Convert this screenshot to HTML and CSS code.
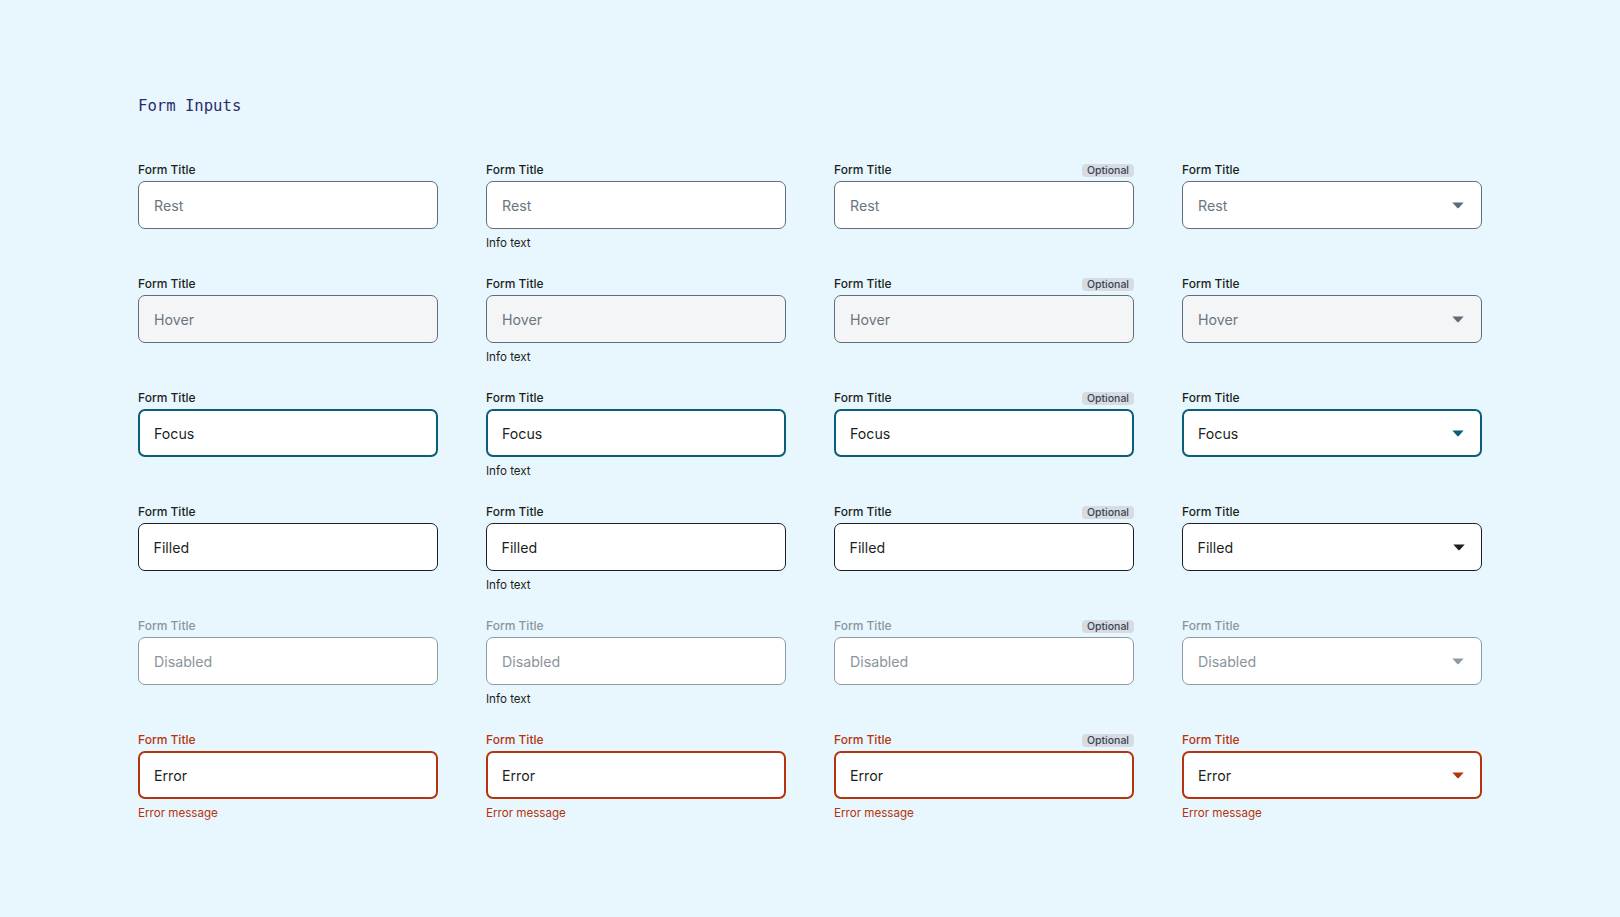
FILE: index.html
```html
<!DOCTYPE html>
<html lang="en">
<head>
<meta charset="utf-8">
<title>Form Inputs</title>
<link rel="stylesheet" href="styles.css">
</head>
<body>
<main class="page">
  <h1 class="page-title">Form Inputs</h1>
  <div class="grid" id="grid"></div>
</main>
<script src="app.js"></script>
</body>
</html>
```

FILE: app.js
```js
(function () {
  var states = ['rest', 'hover', 'focus', 'filled', 'disabled', 'error'];
  var labels = { rest: 'Rest', hover: 'Hover', focus: 'Focus', filled: 'Filled', disabled: 'Disabled', error: 'Error' };
  var chevron = '<svg class="chev" width="12" height="7" viewBox="0 0 12 7" aria-hidden="true"><path d="M0.3 0.4 H11.7 L6.7 5.9 Q6 6.6 5.3 5.9 Z" fill="currentColor"/></svg>';
  var grid = document.getElementById('grid');
  var html = '';
  states.forEach(function (s) {
    for (var c = 0; c < 4; c++) {
      var help = '';
      if (s === 'error') help = '<div class="help help-error">Error message</div>';
      else if (c === 1) help = '<div class="help">Info text</div>';
      html += '<div class="field field-' + s + '">' +
        '<div class="label-row"><span class="label">Form Title</span>' +
        (c === 2 ? '<span class="badge">Optional</span>' : '') + '</div>' +
        '<div class="box"><span class="value">' + labels[s] + '</span>' +
        (c === 3 ? chevron : '') + '</div>' + help + '</div>';
    }
  });
  grid.innerHTML = html;
})();
```

FILE: styles.css
```css
* { box-sizing: border-box; }
html, body { margin: 0; padding: 0; }
body {
  background: #e8f7fd;
  font-family: Inter, "Noto Sans", "Liberation Sans", sans-serif;
  color: #1b1f23;
}
.page {
  width: 1344px;
  margin: 0 auto;
  padding-top: 96px;
}
.page-title {
  margin: 0 0 46px;
  font-family: "DejaVu Sans Mono", "Liberation Mono", monospace;
  font-weight: 400;
  font-size: 15.6px;
  line-height: 20px;
  color: #2c2b6a;
}
.grid {
  display: grid;
  grid-template-columns: repeat(4, 300px);
  grid-auto-rows: 89px;
  column-gap: 48px;
  row-gap: 25px;
  align-items: start;
}
.field { display: flex; flex-direction: column; }
.label-row {
  display: flex;
  justify-content: space-between;
  align-items: center;
  height: 16px;
  margin-bottom: 3px;
}
.label {
  font-size: 12px;
  font-weight: 500;
  line-height: 16px;
  color: #1b1f23;
}
.badge {
  font-size: 10.5px;
  font-weight: 500;
  line-height: 13px;
  padding: 0 5px;
  border-radius: 4px;
  background: #d6dce2;
  color: #3b4550;
}
.box {
  height: 48px;
  display: flex;
  align-items: center;
  justify-content: space-between;
  padding: 1px 17px 0 15px;
  background: #ffffff;
  border: 1px solid #5f6d78;
  border-radius: 7px;
}
.value {
  font-size: 14.2px;
  line-height: 20px;
  color: #6b7680;
}
.chev { color: #5f6b76; display: block; }
.help {
  margin-top: 6px;
  font-size: 11.6px;
  line-height: 16px;
  color: #1b1f23;
}
.help-error { color: #b5330f; }

/* hover */
.field-hover .box { background: #f3f5f7; }

/* focus */
.field-focus .box { border: 2px solid #0b5e77; padding: 1px 16px 0 14px; }
.field-focus .value { color: #1b1f23; }
.field-focus .chev { color: #0b5e77; }

/* filled */
.field-filled .box { border: 1.5px solid #1b1f23; padding: 1px 16.5px 0 14.5px; }
.field-filled .value { color: #1b1f23; }
.field-filled .chev { color: #1b1f23; }

/* disabled */
.field-disabled .label { color: #8a959e; }
.field-disabled .box { border-color: #8e9aa3; }
.field-disabled .value { color: #8a959e; }
.field-disabled .chev { color: #8e9aa3; }

/* error */
.field-error .label { color: #b5330f; }
.field-error .box { border: 2px solid #b5330f; padding: 1px 16px 0 14px; }
.field-error .value { color: #1b1f23; }
.field-error .chev { color: #b5330f; }
```
